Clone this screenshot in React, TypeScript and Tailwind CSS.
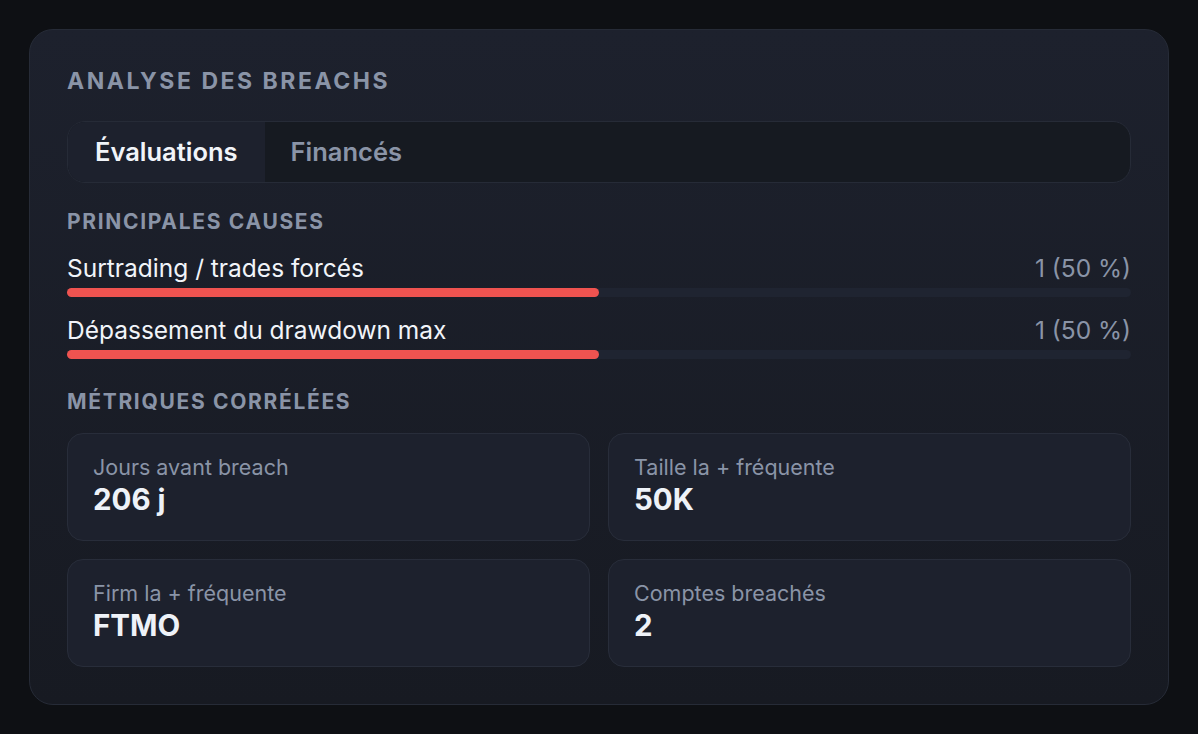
import React from "react";

const causes = [
  { label: "Surtrading / trades forcés", value: "1 (50 %)", pct: 50 },
  { label: "Dépassement du drawdown max", value: "1 (50 %)", pct: 50 },
];

const metrics = [
  { label: "Jours avant breach", value: "206 j" },
  { label: "Taille la + fréquente", value: "50K" },
  { label: "Firm la + fréquente", value: "FTMO" },
  { label: "Comptes breachés", value: "2" },
];

export default function App() {
  return (
    <div
      className="min-h-[734px] w-full bg-[#0e1014] pt-[29px] px-[29px] pb-[29px]"
      style={{ fontFamily: "Inter, 'Noto Sans', sans-serif" }}
    >
      <div className="rounded-[24px] border border-[#262b37] bg-gradient-to-b from-[#1d212d] to-[#171a22] px-[37px] pt-[35px] pb-[37px]">
        <h2 className="text-[23px] leading-[33px] font-bold tracking-[0.11em] text-[#8a94a7]">
          ANALYSE DES BREACHS
        </h2>

        <div className="mt-[23px] flex h-[62px] overflow-hidden rounded-[18px] border border-[#262b37] bg-[#161a21]">
          <div className="flex items-center bg-[#1d212d] px-[27px] text-[25.5px] font-semibold text-[#f1f4f9]">
            Évaluations
          </div>
          <div className="flex items-center px-[26px] text-[25.5px] font-semibold text-[#8a94a7]">
            Financés
          </div>
        </div>

        <div className="mt-[24px] text-[21px] leading-[30px] font-bold tracking-[0.08em] text-[#8a94a7]">
          PRINCIPALES CAUSES
        </div>

        <div className="mt-[14px] flex flex-col gap-[16px]">
          {causes.map((c) => (
            <div key={c.label} className="flex flex-col">
              <div className="flex items-center justify-between text-[24.5px] leading-[34px]">
                <span className="text-[#f1f4f9]">{c.label}</span>
                <span className="text-[#8a94a7]">{c.value}</span>
              </div>
              <div className="mt-[3px] h-[9px] w-full rounded-full bg-[#1f2431]">
                <div
                  className="h-full rounded-full bg-[#ef5350]"
                  style={{ width: `${c.pct}%` }}
                />
              </div>
            </div>
          ))}
        </div>

        <div className="mt-[28px] text-[21px] leading-[30px] font-bold tracking-[0.08em] text-[#8a94a7]">
          MÉTRIQUES CORRÉLÉES
        </div>

        <div className="mt-[16px] grid grid-cols-2 gap-[18px]">
          {metrics.map((m) => (
            <div
              key={m.label}
              className="flex h-[108px] flex-col rounded-[16px] border border-[#282d3a] bg-[#1d212d] px-[25px] pt-[18px]"
            >
              <div className="text-[21.5px] leading-[30px] text-[#8a94a7]">{m.label}</div>
              <div className="text-[29.5px] leading-[34px] font-bold text-[#eef2f8]">{m.value}</div>
            </div>
          ))}
        </div>
      </div>
    </div>
  );
}
